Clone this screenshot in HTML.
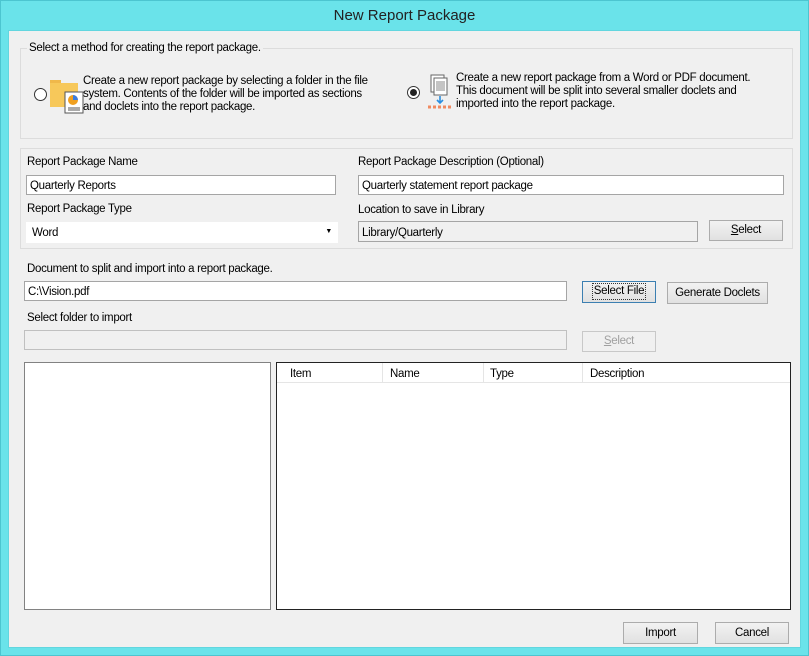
<!DOCTYPE html>
<html><head><meta charset="utf-8"><style>
*{box-sizing:border-box;margin:0;padding:0}
body{width:809px;height:656px;background:#6ae3ea;position:relative;overflow:hidden;font-family:"Liberation Sans",sans-serif;font-size:11.5px;color:#000;letter-spacing:-0.3px}
.a{position:absolute}
#frame{left:0;top:0;width:809px;height:656px;border:1px solid #4cc5d0}
#title{left:0;top:7px;width:809px;text-align:center;font-size:15px;letter-spacing:0;color:#222}
#content{left:8px;top:30px;width:793px;height:618px;background:#f0f0f0;border:1px solid #62d6df}
.grp{border:1px solid #dcdcdc}
.in{background:#fff;border:1px solid #a5a5a5;padding:4px 3px 0;line-height:13px}
.btn{background:linear-gradient(#f2f2f2,#e1e1e1);border:1px solid #acacac;text-align:center;line-height:18px}
.dis{background:#f0f0f0;border:1px solid #c8c8c8;color:#a0a0a0}
.radio{width:13px;height:13px;border-radius:50%;border:1px solid #333;background:#fff}
.lbl{white-space:nowrap}
.p{line-height:13px;white-space:nowrap}
</style></head><body>
<div class="a" id="frame"></div>
<div class="a" id="title">New Report Package</div>
<div class="a" id="content"></div>

<div class="a grp" style="left:20px;top:48px;width:773px;height:91px"></div>
<div class="a lbl" style="left:27px;top:42px;background:#f0f0f0;padding:0 2px">Select a method for creating the report package.</div>
<div class="a radio" style="left:34px;top:88px"></div>
<svg class="a" style="left:49px;top:78px" width="36" height="36" viewBox="0 0 36 36">
<rect x="1" y="2" width="11" height="4" fill="#f0b84a"/><rect x="1" y="5" width="28" height="24" fill="#f7c85a"/>
<rect x="16" y="14" width="18" height="21" fill="#fff" stroke="#555"/>
<circle cx="24" cy="22" r="5" fill="#f0a020"/><path d="M24 22V17A5 5 0 0 1 29 22Z" fill="#3b7de0"/>
<path d="M19 30h12M19 32h12" stroke="#555"/></svg>
<div class="a p" style="left:83px;top:75px">Create a new report package by selecting a folder in the file<br>system. Contents of the folder will be imported as sections<br>and doclets into the report package.</div>
<div class="a radio" style="left:407px;top:86px"></div>
<div class="a" style="left:410px;top:89px;width:7px;height:7px;border-radius:50%;background:#222"></div>
<svg class="a" style="left:427px;top:74px" width="26" height="36" viewBox="0 0 26 36">
<rect x="4" y="1" width="13" height="17" fill="#fff" stroke="#666"/><rect x="7" y="4" width="13" height="17" fill="#fff" stroke="#666"/>
<path d="M9 8h9M9 10h9M9 12h9M9 14h9M9 16h9" stroke="#888"/>
<path d="M13 22v6M10 26l3 3 3-3" stroke="#2a8ee0" stroke-width="1.6" fill="none"/>
<path d="M1 33h3M6 33h3M11 33h3M16 33h3M21 33h3" stroke="#f08a60" stroke-width="3"/></svg>
<div class="a p" style="left:456px;top:72px">Create a new report package from a Word or PDF document.<br>This document will be split into several smaller doclets and<br>imported into the report package.</div>

<div class="a grp" style="left:20px;top:148px;width:773px;height:101px"></div>
<div class="a lbl" style="left:27px;top:156px">Report Package Name</div>
<div class="a in" style="left:26px;top:175px;width:310px;height:20px">Quarterly Reports</div>
<div class="a lbl" style="left:358px;top:156px">Report Package Description (Optional)</div>
<div class="a in" style="left:358px;top:175px;width:426px;height:20px">Quarterly statement report package</div>
<div class="a lbl" style="left:27px;top:203px">Report Package Type</div>
<div class="a" style="left:26px;top:222px;width:312px;height:21px;background:#fff;padding:5px 6px">Word<span style="position:absolute;right:6px;top:6px;font-size:7px">▼</span></div>
<div class="a lbl" style="left:358px;top:204px">Location to save in Library</div>
<div class="a in" style="left:358px;top:221px;width:340px;height:21px;background:#f0f0f0;padding-top:5px">Library/Quarterly</div>
<div class="a btn" style="left:709px;top:220px;width:74px;height:21px"><u>S</u>elect</div>

<div class="a lbl" style="left:27px;top:263px">Document to split and import into a report package.</div>
<div class="a in" style="left:24px;top:281px;width:543px;height:20px">C:\Vision.pdf</div>
<div class="a btn" style="left:582px;top:281px;width:74px;height:22px;border:1px solid #3c7fb1;line-height:18px"><span style="display:inline-block;border:1px dotted #333;padding:0 1px;line-height:15px;margin-top:1px">Select File</span></div>
<div class="a btn" style="left:667px;top:282px;width:101px;height:22px;line-height:20px">Generate Doclets</div>
<div class="a lbl" style="left:27px;top:312px">Select folder to import</div>
<div class="a" style="left:24px;top:330px;width:543px;height:20px;background:#f0f0f0;border:1px solid #c0c0c0"></div>
<div class="a btn dis" style="left:582px;top:331px;width:74px;height:21px"><u>S</u>elect</div>

<div class="a" style="left:24px;top:362px;width:247px;height:248px;background:#fff;border:1px solid #828282"></div>
<div class="a" style="left:276px;top:362px;width:515px;height:248px;background:#fff;border:1px solid #222"></div>
<div class="a" style="left:277px;top:382px;width:513px;height:1px;background:#e5e5e5"></div>
<div class="a" style="left:382px;top:363px;width:1px;height:20px;background:#e5e5e5"></div>
<div class="a" style="left:483px;top:363px;width:1px;height:20px;background:#e5e5e5"></div>
<div class="a" style="left:582px;top:363px;width:1px;height:20px;background:#e5e5e5"></div>
<div class="a lbl" style="left:290px;top:368px">Item</div>
<div class="a lbl" style="left:390px;top:368px">Name</div>
<div class="a lbl" style="left:490px;top:368px">Type</div>
<div class="a lbl" style="left:590px;top:368px">Description</div>

<div class="a btn" style="left:623px;top:622px;width:75px;height:22px;line-height:20px">Import</div>
<div class="a btn" style="left:715px;top:622px;width:74px;height:22px;line-height:20px">Cancel</div>
</body></html>
